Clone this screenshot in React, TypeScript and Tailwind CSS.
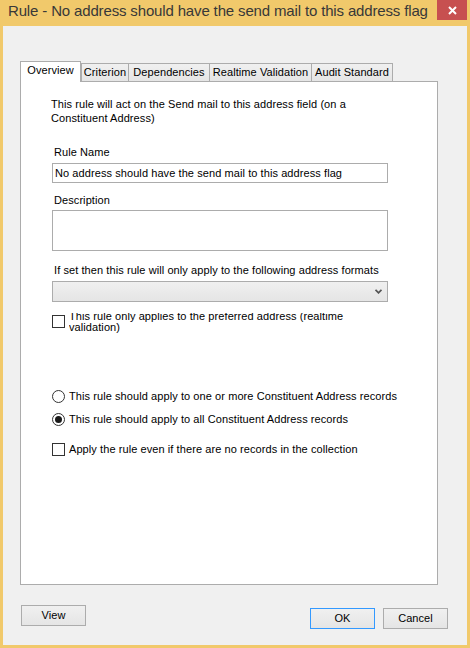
import React from 'react';

const TABS = [
  { label: 'Criterion', w: 'w-[47px]' },
  { label: 'Dependencies', w: 'w-[81px]' },
  { label: 'Realtime Validation', w: 'w-[102px]' },
  { label: 'Audit Standard', w: 'w-[82px] border-r' },
];

function CheckBox() {
  return <span className="block w-[13px] h-[13px] border border-[#333333] bg-white shrink-0" />;
}

function Radio({ checked }: { checked?: boolean }) {
  return (
    <span className="flex items-center justify-center w-[13px] h-[13px] rounded-full border border-[#333333] bg-white shrink-0">
      {checked && <span className="block w-[7px] h-[7px] rounded-full bg-[#1a1a1a]" />}
    </span>
  );
}

function Button({ label, primary }: { label: string; primary?: boolean }) {
  return (
    <button
      type="button"
      className={
        primary
          ? 'w-[65px] h-[21px] border border-[#3399ff] bg-linear-to-b from-[#f0f0f0] to-[#e5e5e5] text-[11px] leading-[13px] text-black'
          : 'w-[65px] h-[21px] border border-[#acacac] bg-linear-to-b from-[#f0f0f0] to-[#e5e5e5] text-[11px] leading-[13px] text-black'
      }
    >
      {label}
    </button>
  );
}

export default function App() {
  return (
    <div className="w-[470px] h-[648px] bg-[#f1c96b] px-[3px] pb-[3px] flex flex-col font-['Liberation_Sans',Arial,sans-serif] text-[11px] leading-[13px] tracking-[0.08px] text-black">
      {/* title bar */}
      <div className="h-[26px] flex items-start shrink-0">
        <div className="flex-1 min-w-0 overflow-hidden whitespace-nowrap pl-[5px] pt-[1px] text-[15px] leading-[20px] tracking-[-0.15px] text-[#383838]">
          Rule - No address should have the send mail to this address flag
        </div>
        <div className="w-[30px] h-[20px] bg-[#c75050] flex items-center justify-center shrink-0">
          <svg width="9" height="9" viewBox="0 0 9 9">
            <path d="M1 1 L8 8 M8 1 L1 8" stroke="white" strokeWidth="2" />
          </svg>
        </div>
      </div>

      <div className="flex-1 bg-[#f0f0f0] flex flex-col">
        <div className="pl-[17px] pr-[29px] pt-[35px]">
          {/* tabs */}
          <div className="flex items-end h-[20px]">
            <div className="relative z-10 mb-[-1px] w-[61px] h-[21px] border-t border-l border-r border-[#acacac] bg-white pt-[2px] text-center">
              Overview
            </div>
            {TABS.map((t) => (
              <div
                key={t.label}
                className={`${t.w} h-[18px] border-t border-l border-[#acacac] bg-linear-to-b from-[#f0f0f0] to-[#e5e5e5] pt-[2px] text-center whitespace-nowrap`}
              >
                {t.label}
              </div>
            ))}
          </div>

          {/* panel */}
          <div className="h-[504px] border border-[#acacac] bg-white pl-[30px]">
            <p className="mt-[15px] w-[320px] leading-[14px]">
              This rule will act on the Send mail to this address field (on a Constituent Address)
            </p>

            <div className="mt-[21px] ml-[3px]">Rule Name</div>
            <div className="mt-[4px] ml-[1px] w-[336px] h-[20px] border border-[#acacac] bg-white flex items-center pl-[2px] whitespace-nowrap">
              No address should have the send mail to this address flag
            </div>

            <div className="mt-[11px] ml-[3px]">Description</div>
            <div className="mt-[3px] ml-[1px] w-[336px] h-[41px] border border-[#acacac] bg-white" />

            <div className="mt-[13px] ml-[3px]">If set then this rule will only apply to the following address formats</div>
            <div className="mt-[4px] ml-[1px] w-[336px] h-[21px] border border-[#acacac] bg-linear-to-b from-[#f0f0f0] to-[#e5e5e5] flex items-center justify-end pr-[5px]">
              <svg width="7" height="5" viewBox="0 0 7 5">
                <path d="M0.5 0.8 L3.5 3.8 L6.5 0.8" stroke="#555555" strokeWidth="1.8" fill="none" />
              </svg>
            </div>

            <div className="mt-[11px] ml-[1px] flex items-start">
              <div className="mt-[2px]">
                <CheckBox />
              </div>
              <div className="ml-[4px] h-[20px] overflow-hidden">
                <div className="mt-[-2px] w-[290px] leading-[11px]">
                  This rule only applies to the preferred address (realtime validation)
                </div>
              </div>
            </div>

            <div className="mt-[57px] ml-[1px] flex items-center gap-[4px]">
              <Radio />
              <span>This rule should apply to one or more Constituent Address records</span>
            </div>
            <div className="mt-[10px] ml-[1px] flex items-center gap-[4px]">
              <Radio checked />
              <span>This rule should apply to all Constituent Address records</span>
            </div>
            <div className="mt-[17px] ml-[1px] flex items-center gap-[4px]">
              <CheckBox />
              <span>Apply the rule even if there are no records in the collection</span>
            </div>
          </div>
        </div>

        {/* buttons */}
        <div className="mt-[20px] pl-[18px] pr-[19px] flex justify-between items-start">
          <Button label="View" />
          <div className="mt-[3px] flex gap-[8px]">
            <Button label="OK" primary />
            <Button label="Cancel" />
          </div>
        </div>
      </div>
    </div>
  );
}
